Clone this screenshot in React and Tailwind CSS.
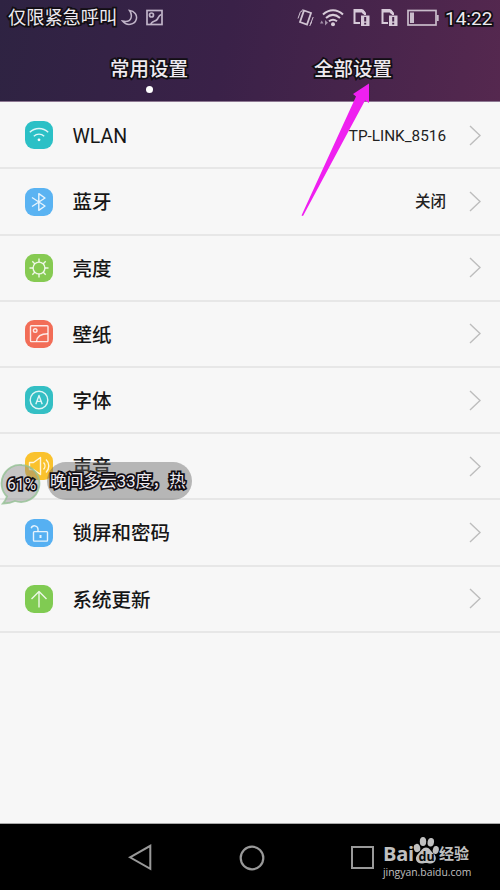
const outlined = 'text-[#eeeaf0] [-webkit-text-stroke:3.5px_#120e14] [paint-order:stroke_fill]';

const icons = {
  wifi: (
    <g>
      <path d="M4.8 11.3a13 13 0 0 1 18.4 0" />
      <path d="M8.8 15.2a7.6 7.6 0 0 1 10.4 0" />
      <circle cx="14" cy="18.8" r="1.4" fill="white" stroke="none" />
    </g>
  ),
  bluetooth: <path d="M7 9.5 20 18 13.8 22.3V5.7l6.2 4.3L7 18.5" />,
  brightness: (
    <g>
      <circle cx="14" cy="14" r="5.9" />
      <path d="M14 4.5v3.5M14 20v3.5M4.5 14h3.5M20 14h3.5M7.3 7.3l2.4 2.4M18.3 18.3l2.4 2.4M20.7 7.3l-2.4 2.4M9.7 18.3l-2.4 2.4" />
    </g>
  ),
  wallpaper: (
    <g>
      <rect x="5.5" y="5.8" width="17.5" height="15.8" rx="0.8" />
      <circle cx="10.2" cy="10.6" r="1.8" />
      <path d="M11.5 21.5c.5-5 4.5-7.8 11.5-7.8" />
    </g>
  ),
  font: (
    <g>
      <circle cx="14" cy="14" r="8.8" />
      <path d="M10.8 18.3 14 9.5l3.2 8.8M11.9 15.4h4.2" />
    </g>
  ),
  sound: (
    <g>
      <path d="M4.5 10.5v7h4l7 5v-17l-7 5z" />
      <path d="M18.5 10.5a5 5 0 0 1 0 7M21 7.5a9 9 0 0 1 0 13" />
    </g>
  ),
  lock: (
    <g>
      <rect x="8.5" y="12.6" width="14" height="9.5" rx="0.8" />
      <path d="M13 12.5V10a3.5 3.5 0 0 0-6.800-.8" />
      <path d="M15.5 16v3" strokeWidth="2" />
    </g>
  ),
  update: <path d="M14 22.5V7M6.5 14 14 6.5l7.5 7.5" />,
};

const settings = [
  { label: 'WLAN', value: 'TP-LINK_8516', icon: 'wifi', color: 'bg-[#2bc0c6]' },
  { label: '蓝牙', value: '关闭', icon: 'bluetooth', color: 'bg-[#5ab3f2]' },
  { label: '亮度', icon: 'brightness', color: 'bg-[#86ca52]' },
  { label: '壁纸', icon: 'wallpaper', color: 'bg-[#f26d57]' },
  { label: '字体', icon: 'font', color: 'bg-[#34bfc4]' },
  { label: '声音', icon: 'sound', color: 'bg-[#fac22d]' },
  { label: '锁屏和密码', icon: 'lock', color: 'bg-[#56b0f2]' },
  { label: '系统更新', icon: 'update', color: 'bg-[#80cb52]' },
];

const SimIcon = () => (
  <svg className="w-[17px] h-[19px]" viewBox="0 0 17 19" fill="none" stroke="#d6c9d8" strokeWidth="2">
    <path d="M7 15H1.500V2h7L12 5.500V7" />
    <path d="M1 3h8.500l2 2.500" strokeWidth="3" />
    <path d="M8 7.500h8.500v10.500H8z" fill="#d6c9d8" stroke="none" />
    <path d="M12.200 9v4.500M12.200 14.800v1.700" stroke="#45244b" />
  </svg>
);

const StatusBar = () => (
  <div className="flex items-center h-[35px] pl-2">
    <span className={`w-[109px] text-[18.2px] leading-[35px] whitespace-nowrap ${outlined}`}>仅限紧急呼叫</span>
    <svg className="w-[18px] h-[18px] ml-1" viewBox="0 0 18 18" fill="none" stroke="#c0b4c8" strokeWidth="1.5">
      <path d="M8.5 1.5c5 .5 8 4.5 6.800 8.800-1.500 5.500-9.500 7.200-13.800 1.700 4.500 1 7.500 0 8.500-3 .8-2.500 0-5.500-1.500-7.500z" />
    </svg>
    <svg className="w-[17px] h-[17px] ml-[7px]" viewBox="0 0 17 17" fill="none" stroke="#c0b4c8" strokeWidth="1.7">
      <rect x="1" y="1.5" width="15" height="14" />
      <circle cx="5.5" cy="6" r="2" />
      <path d="M5 15.5c0-4 5-2.500 6.500-5.500 1-2 1.500-4 4-4.500" />
    </svg>
    <svg className="w-[17px] h-[19px] ml-[134px]" viewBox="0 0 17 19" fill="none" stroke="#d0c3d2" strokeWidth="1.8">
      <path d="M7 2.500 14 5 10 16.500 3 14z" />
      <path d="M3.500 3.500 1 10.500M5.500 1.500 4.500 4M16.200 9l-2.700 7M14.500 14l-1.800 4" strokeWidth="1" />
    </svg>
    <svg className="w-[25px] h-[19px] ml-[6px]" viewBox="0 0 25 19" fill="none" stroke="#d8ccd9" strokeWidth="2">
      <path d="M3 6.500c6-5.800 14-5.800 20 0M6 10c4.500-4 9.500-4 14 0M9 13.300c2.500-2 5.500-2 8 0" />
      <circle cx="13" cy="16.2" r="2" fill="#d8ccd9" stroke="none" />
      <path d="M0 15.500h3.500L1.700 12.500zM5 12v5.500l3-2.700z" fill="#a391a8" stroke="none" />
    </svg>
    <div className="flex gap-[11px] ml-[8px]">
      <SimIcon />
      <SimIcon />
    </div>
    <svg className="w-[32px] h-[18px] ml-[9px]" viewBox="0 0 32 18" fill="none" stroke="#c9bdcb" strokeWidth="1.7">
      <rect x="1" y="1.5" width="28" height="14.5" />
      <path d="M3 3.500h4v10.500H3z" fill="#c9bdcb" stroke="none" />
      <path d="M30.700 6v6" strokeWidth="2" />
    </svg>
    <span className={`ml-[6px] pt-[1px] text-[19px] leading-[35px] ${outlined}`}>14:22</span>
  </div>
);

const Header = () => (
  <header className="h-[102px] bg-linear-[100deg,#2e2342_0%,#3a2148_45%,#55284f_100%] border-b border-[#8d7892]">
    <StatusBar />
    <nav className="flex justify-between h-[66px] pl-[110px] pr-[108px] pt-[19px] text-[19.5px] leading-8 font-medium">
      <div className="flex flex-col items-center">
        <span className={outlined}>常用设置</span>
        <span className="w-[7px] h-[7px] rounded-full bg-white" />
      </div>
      <span className={outlined}>全部设置</span>
    </nav>
  </header>
);

const SettingRow = ({ item }) => (
  <li className="flex items-center h-[66.2px] pl-[25px] pr-[19px] border-b-2 border-[#e7e7e7]">
    <div className={`w-7 h-7 rounded-[9px] ${item.color}`}>
      <svg className="w-7 h-7" viewBox="0 0 28 28" fill="none" stroke="white" strokeOpacity="0.85" strokeWidth="1.4" strokeLinejoin="round">
        {icons[item.icon]}
      </svg>
    </div>
    <span className={`ml-[19.5px] text-[19.5px] text-[#161616] ${item.icon === 'wifi' ? 'pt-[3px]' : 'pt-[3px] font-medium'}`}>{item.label}</span>
    <span className={`ml-auto text-[#222] ${item.icon === 'wifi' ? 'pt-[2px] text-[15.3px]' : 'pt-[3px] text-[15.5px] font-medium'}`}>{item.value}</span>
    <svg className="w-[12px] h-[21px] ml-[23px]" viewBox="0 0 12 21" fill="none" stroke="#bdbdbd" strokeWidth="1.4">
      <path d="M1 1l10 9.500L1 20" />
    </svg>
  </li>
);

const Watermark = () => (
  <div className="ml-[9px] w-[90px] pt-[10px] text-[#c0c0c0]">
    <div className="flex items-end h-[31px]">
      <span className="w-[30px] font-['Open_Sans'] text-[20px] leading-[22px] font-bold tracking-[-0.3px]">Bai</span>
      <svg className="w-[26px] h-[30px]" viewBox="0 0 26 30" fill="#c0c0c0">
        <ellipse cx="4" cy="13" rx="3.2" ry="4.2" transform="rotate(-12 4 13)" />
        <ellipse cx="10" cy="6.5" rx="3.2" ry="4.5" />
        <ellipse cx="17.8" cy="7.2" rx="3.2" ry="4.3" transform="rotate(10 17.8 7.2)" />
        <ellipse cx="22.8" cy="15" rx="3" ry="4.1" transform="rotate(12 22.8 15)" />
        <path d="M13 12.500c3.500 0 4.500 3.500 7.500 6 4.500 4 2 10-3 10-2 0-3-.5-4.500-.5s-2.500.5-4.500.5c-4.500 0-8-5-3.500-9.500 3.500-3.500 4.500-6.500 8-6.500z" />
        <text x="5.5" y="26" fontFamily="Open Sans" fontSize="12.5" fontWeight="700" fill="#080808">du</text>
      </svg>
      <span className="text-[15px] leading-[21px] font-bold whitespace-nowrap">经验</span>
    </div>
    <div className="font-['Open_Sans'] text-[10.4px] leading-[14px] font-medium whitespace-nowrap">jingyan.baidu.com</div>
  </div>
);

const BottomNav = () => (
  <footer className="flex h-[66px] pl-[128px] bg-black">
    <svg className="w-[25px] h-[27px] mt-5" viewBox="0 0 25 27" fill="none" stroke="#999" strokeWidth="2">
      <path d="M2 13.300 22.300 1.800v23z" />
    </svg>
    <svg className="w-[26px] h-[26px] ml-[86px] mt-[20.5px]" viewBox="0 0 26 26" fill="none" stroke="#999" strokeWidth="2.2">
      <circle cx="13" cy="13" r="11.3" />
    </svg>
    <div className="w-[23px] h-[23px] ml-[86px] mt-[22px] border-2 border-[#999]" />
    <Watermark />
  </footer>
);

// Battery bubble and weather pill floating over the list
const FloatingStatus = () => (
  <div className="absolute left-0 top-[462px] h-[44px]">
    <svg className="absolute left-0 top-0 w-[44px] h-[44px]" viewBox="0 0 44 44">
      <path d="M22 3a18.500 18.500 0 1 1-7 36c-3 1.500-7 2.500-12 2.500 2-2 3-4.500 4-7A18.500 18.500 0 0 1 22 3z" fill="#888" fillOpacity="0.45" stroke="#93c193" strokeOpacity="0.8" strokeWidth="1.8" />
    </svg>
    <span className={`absolute left-[7px] top-[11px] text-[15.7px] leading-[24px] ${outlined}`}>61%</span>
    <div className="absolute left-[47px] top-0 w-[145px] h-[38px] pl-[3px] rounded-full bg-[#666]/45 overflow-hidden">
      <span className={`block text-[16.7px] leading-[40px] whitespace-nowrap ${outlined}`}>晚间多云33度，热</span>
    </div>
  </div>
);

const App = () => {
  return (
    <div className="relative flex flex-col w-[500px] h-[890px] overflow-hidden bg-[#f7f7f7] font-[Roboto,'Noto_Sans_CJK_SC',sans-serif]">
      <Header />
      <ul className="flex-1 pt-[1.3px] border-b border-[#aaa]">
        {settings.map((item) => (
          <SettingRow key={item.label} item={item} />
        ))}
      </ul>
      <BottomNav />
      <FloatingStatus />
      {/* Pointer to the second tab */}
      <svg className="absolute left-[300px] top-[82px] w-[72px] h-[136px]" viewBox="0 0 72 136" fill="#ef20f0">
        <path d="M69 1.500 69 21 65 18.500 3 134l-1.500-.5L56 14.500l-3-2.500z" />
      </svg>
    </div>
  );
};

export default App;
